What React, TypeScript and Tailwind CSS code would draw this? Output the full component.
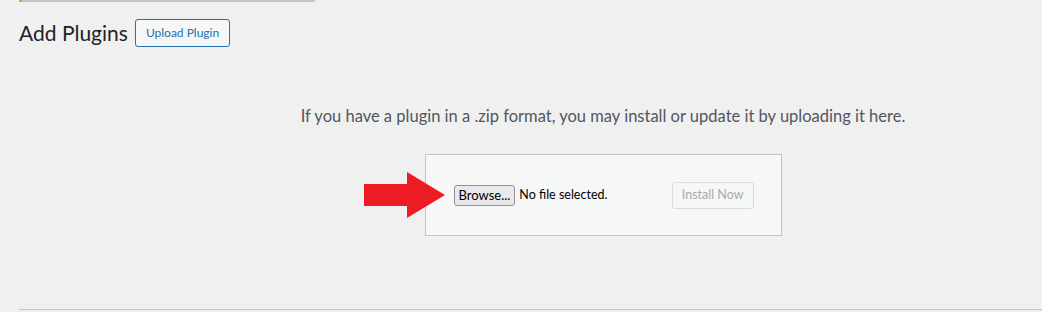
export default function App() {
  return (
    <div
      className="w-[1042px] h-[312px] overflow-hidden bg-[#f0f0f1] text-[#1d2327]"
      style={{ fontFamily: 'Lato, "Open Sans", sans-serif' }}
    >
      {/* notice remnant at top */}
      <div className="ml-[19px] w-[296px] h-[2px] border-l-[3px] border-l-[#dba617] bg-[#c3c4c7]" />

      {/* heading */}
      <div className="ml-[19px] mt-[16px] flex items-center gap-[7px]">
        <h1 className="text-[21px] leading-[29px] font-normal">Add Plugins</h1>
        <button className="h-[28px] px-[10px] text-[12px] rounded-[3px] border border-[#2271b1] text-[#2271b1] bg-[#f6f7f7] leading-none">
          Upload Plugin
        </button>
      </div>

      {/* upload area */}
      <div className="ml-[19px] w-[1168px] h-[262px] flex flex-col items-center">
        <p className="mt-[57px] text-[16.5px] leading-[24px] text-[#50575e]">
          If you have a plugin in a .zip format, you may install or update it by uploading it here.
        </p>
        <div className="relative mt-[26px] w-[357px] h-[82px] border border-[#c3c4c7] bg-[#f6f7f7] flex items-center pl-[28px] pr-[27px]">
          <svg
            className="absolute left-[-62px] top-[17px]"
            width="81"
            height="46"
            viewBox="0 0 81 46"
          >
            <polygon points="0,12 43,12 43,0 81,23 43,46 43,34 0,34" fill="#ed1c24" />
          </svg>
          <button className="h-[21px] px-[4px] text-[13px] leading-none rounded-[3px] border border-[#8f8f9d] bg-[#e9e9ed] text-black">
            Browse...
          </button>
          <span className="ml-[4px] text-[12.5px] text-black">No file selected.</span>
          <button
            disabled
            className="ml-auto h-[27px] px-[9px] text-[12.5px] leading-none rounded-[3px] border border-[#dcdcde] bg-[#f6f7f7] text-[#a7aaad]"
          >
            Install Now
          </button>
        </div>
      </div>

      {/* bottom edge */}
      <div className="ml-[19px] h-[1px] bg-[#c3c4c7]" />
    </div>
  );
}
